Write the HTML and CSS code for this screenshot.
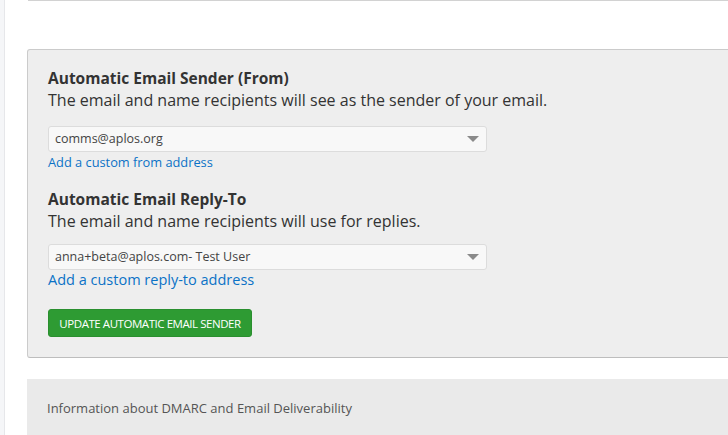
FILE: index.html
```html
<!DOCTYPE html>
<html lang="en">
<head>
<meta charset="utf-8">
<title>Automatic Email Sender</title>
<link rel="stylesheet" href="styles.css">
</head>
<body>
<div class="layout">
  <aside class="rail"></aside>
  <main class="content">
    <div class="top-rule"></div>
    <section class="panel">
      <div class="field">
        <h3 class="field-title">Automatic Email Sender (From)</h3>
        <p class="field-desc">The email and name recipients will see as the sender of your email.</p>
        <div class="select">
          <span class="select-value">comms@aplos.org</span>
          <span class="select-arrow"></span>
        </div>
        <a class="link link-small" href="#">Add a custom from address</a>
      </div>
      <div class="field field-second">
        <h3 class="field-title">Automatic Email Reply-To</h3>
        <p class="field-desc">The email and name recipients will use for replies.</p>
        <div class="select">
          <span class="select-value">anna+beta@aplos.com- Test User</span>
          <span class="select-arrow"></span>
        </div>
        <a class="link link-large" href="#">Add a custom reply-to address</a>
      </div>
      <button class="btn-update" type="button">UPDATE AUTOMATIC EMAIL SENDER</button>
    </section>
    <section class="info">
      <span class="info-text">Information about DMARC and Email Deliverability</span>
    </section>
  </main>
</div>
</body>
</html>
```
FILE: styles.css
```css
* { box-sizing: border-box; }
html, body {
  margin: 0;
  padding: 0;
  background: #fff;
  overflow: hidden;
  height: 435px;
}
body {
  font-family: "Open Sans", "Noto Sans", sans-serif;
  color: #333;
}
.layout {
  display: flex;
  height: 435px;
  overflow: hidden;
}
.rail {
  width: 5px;
  flex: 0 0 5px;
  background: #f5f6f8;
  border-right: 1px solid #e6e7ea;
}
.content {
  flex: 1;
  padding-left: 22px;
  min-width: 0;
  overflow: hidden;
}
.top-rule {
  height: 1px;
  background: #d2d2d2;
  margin-left: 1px;
  width: 800px;
}
.panel {
  margin-top: 48px;
  width: 760px;
  background: #eeeeee;
  border: 1px solid #cbcbcb;
  border-bottom-color: #bdbdbd;
  border-radius: 3px;
  padding: 17px 20px 20px 20px;
}
.field-title {
  margin: 0;
  font-size: 15.5px;
  font-weight: 700;
  line-height: 22px;
  color: #333;
}
.field-desc {
  margin: 0;
  font-size: 16px;
  line-height: 22px;
  color: #333;
}
.select {
  margin-top: 15px;
  width: 439px;
  height: 26px;
  background: #f8f8f8;
  border: 1px solid #dcdcdc;
  border-radius: 3px;
  display: flex;
  align-items: center;
  justify-content: space-between;
  padding: 0 7px 0 6px;
}
.field-second .select {
  margin-top: 12px;
}
.select-value {
  font-size: 12.5px;
  color: #444;
  line-height: 24px;
}
.select-arrow {
  width: 0;
  height: 0;
  border-left: 6px solid transparent;
  border-right: 6px solid transparent;
  border-top: 6px solid #8a8a8a;
}
.link {
  display: block;
  color: #0b72c6;
  text-decoration: none;
}
.link-small {
  font-size: 12.8px;
  line-height: 20px;
}
.link-large {
  font-size: 14.5px;
  line-height: 20px;
}
.field-second {
  margin-top: 16px;
}
.btn-update {
  margin-top: 19px;
  display: block;
  width: 204px;
  height: 28px;
  background: #2e9b33;
  border: 1px solid #2a8f2f;
  border-radius: 3px;
  color: #fff;
  font-family: "Open Sans", "Noto Sans", sans-serif;
  font-size: 11.5px;
  letter-spacing: -0.45px;
  padding: 0;
  text-align: center;
}
.info {
  margin-top: 21px;
  width: 760px;
  height: 60px;
  background: #eaeaea;
  padding: 17px 20px;
}
.info-text {
  font-size: 13px;
  color: #555;
  line-height: 22px;
}
```
